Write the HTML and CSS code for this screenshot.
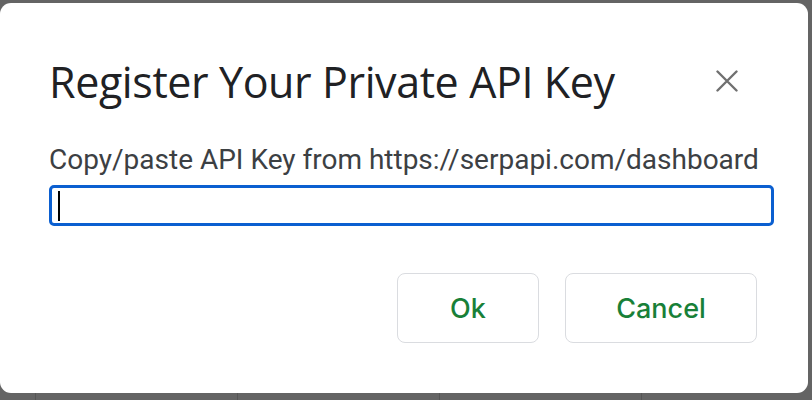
FILE: index.html
```html
<!DOCTYPE html>
<html>
<head>
<meta charset="utf-8">
<link rel="stylesheet" href="styles.css">
</head>
<body>
<div class="backdrop">
  <div class="grid"><span></span><span></span><span></span><span></span></div>
  <div class="dialog">
    <div class="header">
      <h1 class="title">Register Your Private API Key</h1>
      <button class="close" aria-label="Close">
        <svg width="22" height="22" viewBox="0 0 22 22"><path d="M1.5 1.5 L20.5 20.5 M20.5 1.5 L1.5 20.5" stroke="#707070" stroke-width="2.4" stroke-linecap="round" fill="none"/></svg>
      </button>
    </div>
    <label class="label">Copy/paste API Key from https://serpapi.com/dashboard</label>
    <div class="input"><span class="caret"></span></div>
    <div class="actions">
      <button class="btn btn-ok">Ok</button>
      <button class="btn btn-cancel">Cancel</button>
    </div>
  </div>
</div>
</body>
</html>
```
FILE: styles.css
```css
html, body {
  margin: 0;
  padding: 0;
  background: #646464;
  width: 812px;
  height: 400px;
  overflow: hidden;
}
.backdrop {
  position: relative;
  width: 812px;
  height: 400px;
}
.grid {
  position: absolute;
  inset: 0;
}
.grid span {
  position: absolute;
  top: 0;
  bottom: 0;
  width: 1px;
  background: #555;
}
.grid span:nth-child(1) { left: 35px; }
.grid span:nth-child(2) { left: 237px; }
.grid span:nth-child(3) { left: 439px; }
.grid span:nth-child(4) { left: 641px; }
.dialog {
  position: relative;
  margin-top: 3px;
  width: 808px;
  height: 390px;
  background: #fff;
  border-radius: 11px;
  box-sizing: border-box;
  padding: 0 35px 0 49px;
  display: flex;
  flex-direction: column;
}
.header {
  display: flex;
  align-items: center;
  justify-content: space-between;
  height: 132px;
  padding-top: 24px;
  box-sizing: border-box;
}
.title {
  margin: 0;
  font-family: "Open Sans", Roboto, sans-serif;
  font-weight: 400;
  font-size: 43px;
  color: #202124;
  letter-spacing: -0.4px;
  line-height: 1;
}
.close {
  border: 0;
  background: none;
  padding: 0;
  width: 22px;
  height: 22px;
  margin-right: 35px;
  display: flex;
}
.label {
  font-family: Roboto, "Liberation Sans", sans-serif;
  font-size: 28px;
  color: #3c4043;
  line-height: 30px;
  margin-top: 10px;
  display: block;
}
.input {
  margin-top: 10px;
  width: 725px;
  height: 41px;
  box-sizing: border-box;
  border: 3px solid #0b5fd0;
  border-radius: 5px;
  padding: 3px 6px;
  display: flex;
}
.caret {
  width: 2px;
  height: 30px;
  background: #000;
}
.actions {
  display: flex;
  gap: 26px;
  margin-top: 47px;
  justify-content: flex-end;
  padding-right: 16px;
}
.btn {
  font-family: Inter, Roboto, sans-serif;
  font-weight: 500;
  font-size: 27px;
  color: #188038;
  background: #fff;
  border: 1.5px solid #dadce0;
  border-radius: 8px;
  height: 70px;
  padding: 0;
}
.btn-ok { width: 142px; }
.btn-cancel { width: 192px; }
```
